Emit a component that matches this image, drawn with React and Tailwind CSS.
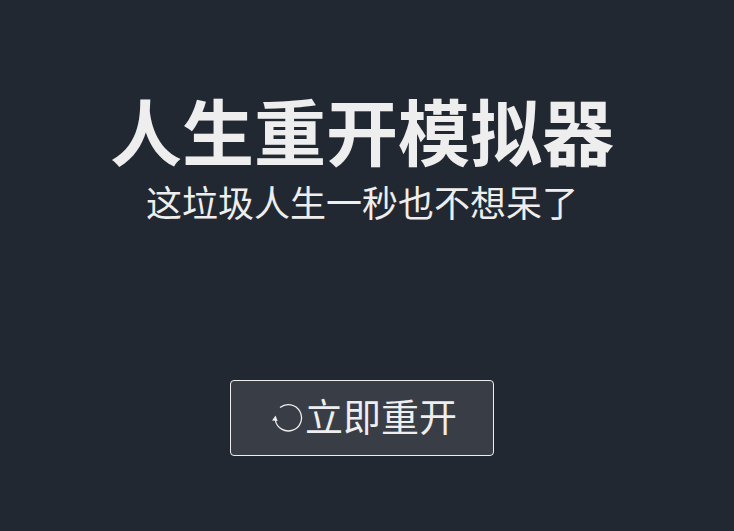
export default function App() {
  return (
    <div className="h-[531px] pr-[10px] bg-[#222831] text-[#eeeeee] flex flex-col items-center font-['Liberation_Sans','Noto_Sans_CJK_SC',sans-serif] overflow-hidden">
      <h1 className="mt-[95px] text-[72px] leading-[80px] font-bold">人生重开模拟器</h1>
      <div className="mt-[3px] text-[36px] leading-[54px]">这垃圾人生一秒也不想呆了</div>
      <button className="mt-[148px] w-[264px] h-[76px] pl-[4px] flex items-center justify-center border border-[#eeeeee] rounded-[4px] bg-[#393e46] text-[38px]">
        <svg width="32" height="32" viewBox="0 0 32 32" fill="none" className="mr-[2px]">
          <path d="M9 5.5A13.2 13.2 0 1 1 4.3 18" stroke="#eeeeee" strokeWidth="1.3" />
          <path d="M1 18.5l3.6-5 2 5.5z" fill="#eeeeee" />
        </svg>
        立即重开
      </button>
    </div>
  );
}
